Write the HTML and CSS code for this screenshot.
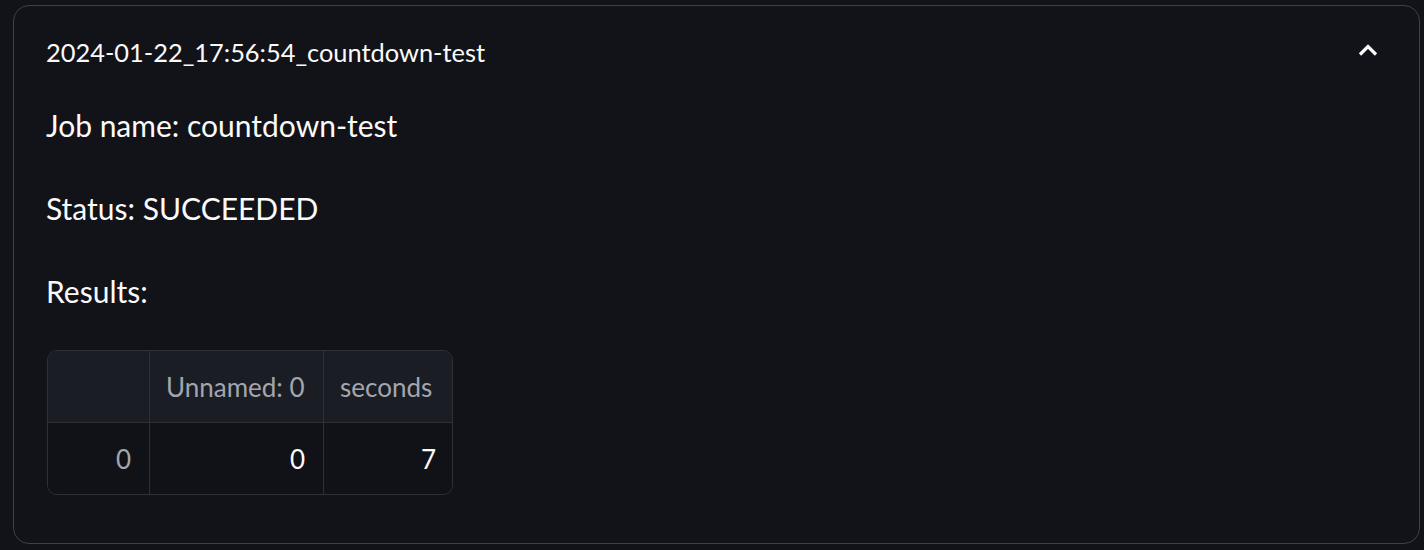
FILE: index.html
```html
<!DOCTYPE html>
<html>
<head>
<meta charset="utf-8">
<link rel="stylesheet" href="styles.css">
</head>
<body>
<div class="page">
  <div class="expander">
    <div class="summary">
      <span class="summary-title">2024-01-22_17:56:54_countdown-test</span>
      <svg class="chevron" width="20" height="14" viewBox="0 0 20 14">
        <path d="M2 11.5 L10 3.5 L18 11.5" fill="none" stroke="#fafafa" stroke-width="3.2"/>
      </svg>
    </div>
    <div class="details">
      <p class="para">Job name: countdown-test</p>
      <p class="para">Status: SUCCEEDED</p>
      <p class="para last-para">Results:</p>
      <div class="grid">
        <div class="cell head idx"></div>
        <div class="cell head c1">Unnamed: 0</div>
        <div class="cell head c2 last">seconds</div>
        <div class="cell body idx bottom">0</div>
        <div class="cell body num c1 bottom">0</div>
        <div class="cell body num c2 last bottom">7</div>
      </div>
    </div>
  </div>
</div>
</body>
</html>
```

FILE: styles.css
```css
html, body {
  margin: 0;
  padding: 0;
  background: #121319;
}
.page {
  padding: 5px 4px 6px 13px;
  font-family: "Lato", "Liberation Sans", sans-serif;
  color: #fafafa;
}
.expander {
  box-sizing: border-box;
  height: 539px;
  border: 1px solid #3f4046;
  border-radius: 16px;
}
.summary {
  display: flex;
  align-items: center;
  justify-content: space-between;
  height: 94px;
  padding: 0 41px 0 32px;
}
.summary-title {
  font-size: 25.4px;
  line-height: 1;
}
.chevron {
  display: block;
  align-self: flex-start;
  margin-top: 37px;
}
.details {
  padding: 0 32px;
}
.para {
  margin: 0 0 32px 0;
  font-size: 30px;
  line-height: 51px;
  height: 51px;
}
.last-para {
  margin-bottom: 33px;
}
.grid {
  display: grid;
  grid-template-columns: 102px 174px 130px;
  width: 406px;
  box-sizing: border-box;
  margin-left: 1px;
  border: 1px solid #2e3036;
  border-radius: 10px;
  overflow: hidden;
}
.cell {
  box-sizing: border-box;
  height: 72px;
  font-size: 26px;
  display: flex;
  align-items: center;
  padding: 0 18px 0 16px;
  border-right: 1px solid #2e3036;
  border-bottom: 1px solid #2e3036;
}
.cell.last { border-right: none; }
.cell.bottom { border-bottom: none; height: 71px; }
.head {
  background: #1b1d24;
  color: #a3a6ad;
}
.body {
  background: #111217;
}
.idx {
  justify-content: flex-end;
  color: #a3a6ad;
}
.num {
  justify-content: flex-end;
}
```
